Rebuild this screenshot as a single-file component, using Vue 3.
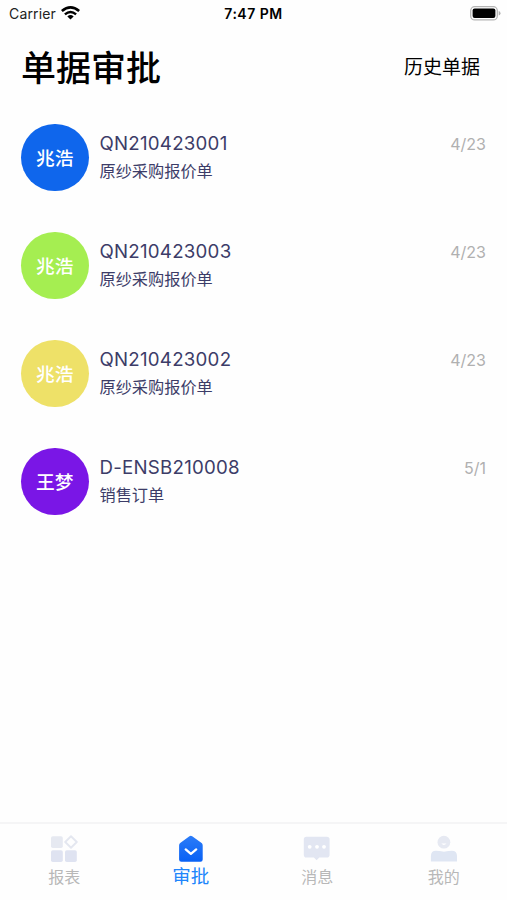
<script setup>
import { ref } from "vue";

const list = ref([
    { id: "QN210423001", name: "兆浩", type: "原纱采购报价单", date: "4/23", color: "#0f66ec" },
    { id: "QN210423003", name: "兆浩", type: "原纱采购报价单", date: "4/23", color: "#a5ee51" },
    { id: "QN210423002", name: "兆浩", type: "原纱采购报价单", date: "4/23", color: "#eee168" },
    { id: "D-ENSB210008", name: "王梦", type: "销售订单", date: "5/1", color: "#7a16e6" },
]);

const tabs = [
    { key: "report", label: "报表" },
    { key: "approve", label: "审批" },
    { key: "message", label: "消息" },
    { key: "mine", label: "我的" },
];
const active = ref("approve");
</script>

<template>
    <div class="page">
        <div class="status">
            <div class="carrier">
                <span>Carrier</span>
                <svg width="19" height="14" viewBox="0 0 18 14" preserveAspectRatio="none">
                    <path d="M.8 5Q9-2.3 17.2 5" fill="none" stroke="#000" stroke-width="2.5" />
                    <path d="M3.7 8.3Q9 3.7 14.3 8.3" fill="none" stroke="#000" stroke-width="2.3" />
                    <path d="M6 10.4Q9 7.8 12 10.4L9 13.6Z" />
                </svg>
            </div>
            <div class="time">7:47 PM</div>
            <svg class="battery" width="31" height="15" viewBox="0 0 31 15">
                <rect x="0.7" y="0.7" width="26.6" height="13.2" rx="4" fill="#fff" stroke="#b4b4b4" stroke-width="1.3" />
                <rect x="2.6" y="2.6" width="22.8" height="9.4" rx="2" />
                <path d="M28.7 5Q30.5 5.6 30.5 7.3T28.7 9.6Z" fill="#b0b0b0" />
            </svg>
        </div>

        <div class="header">
            <h1>单据审批</h1>
            <a class="history">历史单据</a>
        </div>

        <ul class="list">
            <li v-for="item in list" :key="item.id" class="item">
                <div class="avatar" :style="{ backgroundColor: item.color }">{{ item.name }}</div>
                <div class="info">
                    <div class="id">{{ item.id }}</div>
                    <div class="type">{{ item.type }}</div>
                </div>
                <div class="date">{{ item.date }}</div>
            </li>
        </ul>

        <div class="tabbar">
            <a
                v-for="tab in tabs"
                :key="tab.key"
                :class="active === tab.key ? 'tab active' : 'tab'"
                @click="active = tab.key"
            >
                <svg width="28" height="28" viewBox="0 0 28 28">
                    <template v-if="tab.key === 'report'">
                        <rect x="1" y="1.3" width="11.8" height="11.8" rx="1.8" fill="#e6e9f1" />
                        <rect x="1" y="15.2" width="11.8" height="11.8" rx="1.8" fill="#dfe3f1" />
                        <rect x="15" y="15.2" width="11.8" height="11.8" rx="1.8" fill="#dfe3f1" />
                        <path d="M21 1.3L26.8 7L21 12.7L15.2 7Z" fill="none" stroke="#e4e7f0" stroke-width="1.9" stroke-linejoin="round" />
                    </template>
                    <template v-else-if="tab.key === 'approve'">
                        <defs>
                            <linearGradient id="house" x1="0" y1="0" x2="0" y2="1">
                                <stop offset="0" stop-color="#2c7cf8" />
                                <stop offset="1" stop-color="#0861f5" />
                            </linearGradient>
                        </defs>
                        <path d="M12.4 1.3Q13.8 .2 15.2 1.3L24.6 8.1Q25.7 9 25.7 10.5V24.4Q25.7 26.7 23.4 26.7H4.4Q2.1 26.7 2.1 24.4V10.5Q2.1 9 3.2 8.1Z" fill="url(#house)" />
                        <path d="M8.7 14.4L13.9 18.8L19.2 14.4" fill="none" stroke="#fff" stroke-width="2.3" stroke-linecap="round" stroke-linejoin="round" />
                    </template>
                    <template v-else-if="tab.key === 'message'">
                        <path d="M3.4 1.7H23.8Q26.6 1.7 26.6 4.5V19.7Q26.6 22.5 23.8 22.5H16.3L13.6 25.3L10.9 22.5H3.4Q.8 22.5 .8 19.7V4.5Q.8 1.7 3.4 1.7Z" fill="#e2e6f2" />
                        <circle cx="6.7" cy="11.8" r="1.9" fill="#fff" />
                        <circle cx="14" cy="11.8" r="1.9" fill="#fff" />
                        <circle cx="21" cy="11.8" r="1.9" fill="#fff" />
                    </template>
                    <template v-else>
                        <circle cx="13.9" cy="7.2" r="6.4" fill="#e6e9f2" />
                        <path d="M11.3 8.5Q13.9 11.4 16.5 8.5Z" fill="#fff" />
                        <path d="M.9 26.6V21Q.9 15.7 6 15.7Q9.8 15.7 11.4 16.3Q14 17.1 16.6 16.3Q18.2 15.7 21.8 15.7Q27 15.7 27 21V26.6Z" fill="#dfe6f3" />
                    </template>
                </svg>
                <span>{{ tab.label }}</span>
            </a>
        </div>
    </div>
</template>

<style>
body {
    margin: 0;
    background: #fff;
}
</style>

<style scoped>
.page {
    display: flex;
    flex-direction: column;
    height: 900px;
    overflow: hidden;
    background: #fefefe;
    color: #000;
    font-family: Inter, "Noto Sans CJK SC", sans-serif;
}

.status {
    display: grid;
    grid-template-columns: 1fr auto 1fr;
    align-items: center;
    height: 27px;
    padding: 0 6px 0 9px;
    box-sizing: border-box;
    font-size: 14px;
}

.carrier {
    display: flex;
    align-items: center;
    gap: 5px;
    color: #222;
    letter-spacing: 0.15px;
}

.carrier svg {
    margin-top: -2px;
}

.time {
    margin-right: 3px;
    font-weight: 600;
    letter-spacing: 0.5px;
}

.battery {
    justify-self: end;
    margin-top: -1px;
}

.header {
    display: flex;
    align-items: center;
    justify-content: space-between;
    height: 76px;
    padding: 4px 27px 0 21px;
    box-sizing: border-box;
}

h1 {
    margin: 2px 0 0;
    font-size: 35px;
    line-height: 50px;
    font-weight: 500;
}

.history {
    margin-top: 2px;
    font-size: 19px;
    line-height: 28px;
}

.list {
    flex: 1;
    margin: 0;
    padding: 20.6px 21px 0;
    list-style: none;
}

.item {
    display: flex;
    height: 68px;
    margin-bottom: 40px;
}

.avatar {
    width: 67.6px;
    height: 67.6px;
    border-radius: 50%;
    color: #fff;
    font-size: 18.7px;
    font-weight: 500;
    line-height: 69px;
    text-align: center;
}

.info {
    flex: 1;
    margin-left: 10.9px;
    color: #3c3c68;
}

.id {
    margin-top: 6.4px;
    font-size: 18.7px;
    line-height: 28px;
    letter-spacing: 0.24px;
}

.type {
    font-size: 16.2px;
    line-height: 27px;
}

.date {
    margin-top: 6.4px;
    color: #b0b0b0;
    font-size: 16px;
    line-height: 28px;
}

.tabbar {
    display: flex;
    height: 78px;
    box-sizing: border-box;
    padding-left: 1px;
    border-top: 2px solid #f5f5f6;
}

.tab {
    flex: 1;
    display: flex;
    flex-direction: column;
    align-items: center;
    padding-top: 11px;
    color: #b8b8b8;
    font-size: 16px;
    line-height: 29px;
    cursor: pointer;
}

.tab svg {
    flex: none;
}

.tab.active {
    color: #2085fb;
    font-size: 18.5px;
    line-height: 26px;
}
</style>
